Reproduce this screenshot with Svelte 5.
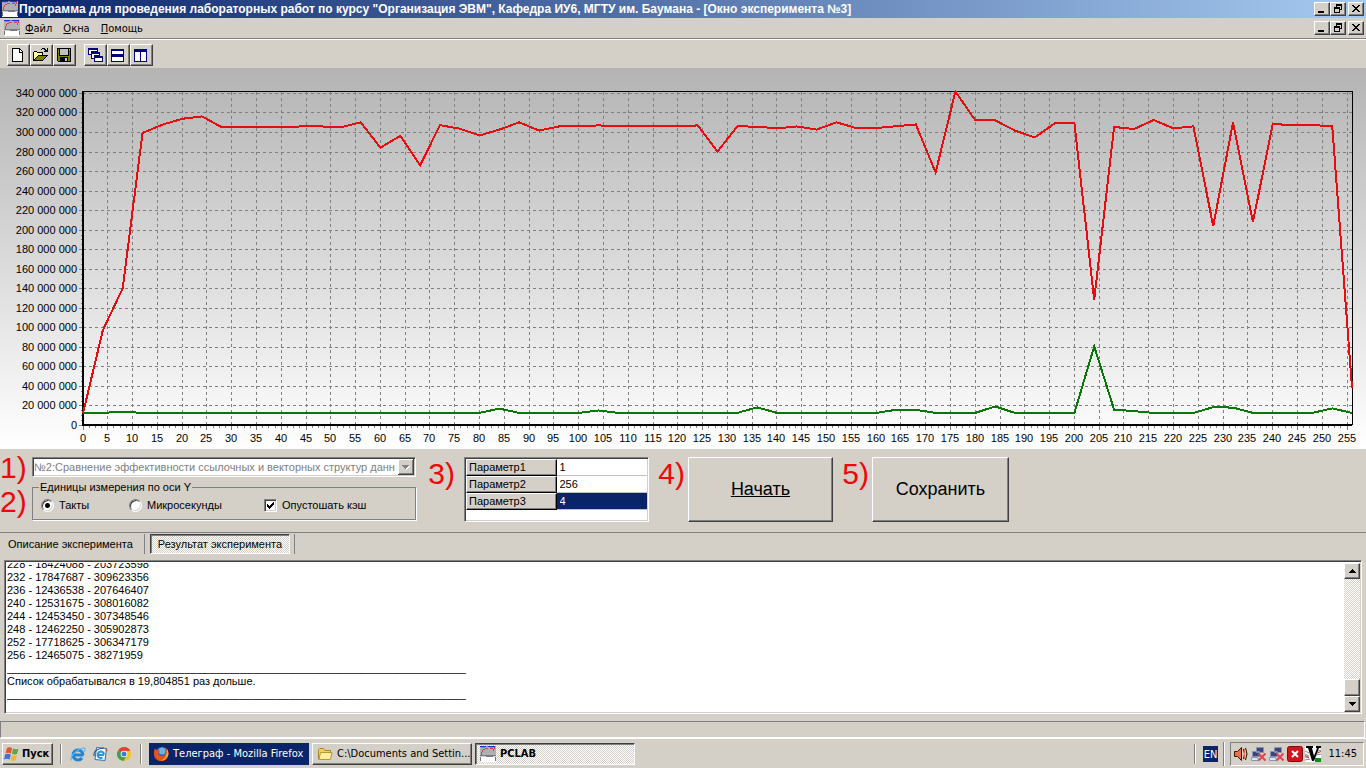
<script>
  const step = 4;
  const redValues = [
    12, 97, 140, 299, 307.5, 313.5, 316, 304.8, 304.8, 304.8, 304.8, 305.8, 305.8, 304.8, 310, 284, 296,
    265.7, 307, 303.5, 296.5, 302.5, 310, 301.5, 305.8, 306, 306.8, 305.8, 305.8, 305.8, 305.8, 306.8, 280,
    305.8, 305.5, 303.6, 305.8, 302.5, 310, 304, 304, 306, 307.8, 258.5, 341.5, 312, 312, 301.5, 294.5,
    308.8, 308.8, 128.3, 305.2, 303, 312.3, 303.7, 305.8, 203.7, 309.6, 207.6, 308, 307.3, 306.8, 306.5, 38.3
  ];
  const greenPeaks = { 8: 13.6, 84: 16.8, 104: 15, 136: 18, 164: 15.6, 168: 15.6, 184: 19, 204: 80.5, 208: 15.8, 212: 14.2, 228: 18.2, 232: 17.8, 252: 17 };
  const greenValues = redValues.map((_, i) => greenPeaks[i * step] ?? 12.4);

  const top = 23;
  const base = 357;
  let width = $state(1366);
  let right = $derived(width - 14);
  const left = 83;

  const yAt = (v) => base - (v * (base - top)) / 342;
  let xAt = $derived((v) => left + (v * (right - left)) / 256);
  const trace = (values) => values.map((v, i) => `${xAt(i * step).toFixed(1)},${yAt(v).toFixed(1)}`).join(' ');

  const yTicks = Array.from({ length: 18 }, (_, i) => i * 20);
  const yMinor = Array.from({ length: 68 }, (_, i) => i * 5);
  const xTicks = Array.from({ length: 52 }, (_, i) => i * 5);
  const xMinor = Array.from({ length: 205 }, (_, i) => i * 1.25);
  const crisp = (n) => Math.round(n) + 0.5;

  const line = '_'.repeat(75);
  const report = [
    '228 - 18424088 - 203723598',
    '232 - 17847687 - 309623356',
    '236 - 12436538 - 207646407',
    '240 - 12531675 - 308016082',
    '244 - 12453450 - 307348546',
    '248 - 12462250 - 305902873',
    '252 - 17718625 - 306347179',
    '256 - 12465075 - 38271959',
    line,
    'Список обрабатывался в 19,804851 раз дольше.',
    line,
    ''
  ].join('\n');

  const params = [
    { name: 'Параметр1', value: '1' },
    { name: 'Параметр2', value: '256' },
    { name: 'Параметр3', value: '4' }
  ];

  let units = $state('ticks');
  let flush = $state(true);
  let output;
  $effect(() => {
    output.scrollTop = output.scrollHeight - output.clientHeight - 2;
  });
</script>

{#snippet appIcon()}
  <svg class="ico" width="16" height="16" viewBox="0 0 16 16" aria-hidden="true">
    <path fill="#b0b0b4" d="M0 0h16v10H0z" />
    <path fill="#2a2ae0" d="M0 0h6v1H0zM8 0h7v1H8z" />
    <path fill="#8585e8" d="M6 0h2v1H6zM1 1h4v1H1zM10 1h4v1h-4z" />
    <path fill="#d8404c" d="M1 6h1v3H1zM2 4h1v2H2zM3 3h2v1H3zM5 2h3v1H5zM10 2h3v1h-3zM13 3h1v2h-1zM14 1h1v2h-1z" />
    <path fill="#7c7c80" d="M0 9h16v1H0zM6 10h7v1H6z" />
    <path fill="#d4d0c8" d="M0 10h6v1H0zM13 10h3v1h-3z" />
    <path fill="#fff" d="M0 11h16v5H0z" />
    <path fill="#777" d="M0 11h1v4H0zM15 11h1v4h-1z" />
  </svg>
{/snippet}

{#snippet windowButtons()}
  <div class="winbtns">
    <button aria-label="Свернуть"><svg width="12" height="10" viewBox="0 0 12 10"><path d="M2 7h6v2H2z" /></svg></button>
    <button aria-label="Восстановить"><svg width="12" height="10" viewBox="0 0 12 10"><path fill-rule="evenodd" d="M4 0h6v6H8v3H2V3h2zM5 2v1h3v2h1V2zM3 5v3h4V5z" /></svg></button>
    <button class="close" aria-label="Закрыть"><svg width="12" height="10" viewBox="0 0 12 10"><path d="M2 1h2v1h1v1h2V2h1V1h2v1H9v1H8v1H7v1h1v1h1v1h1v1H8V7H7V6H5v1H4v1H2V7h1V6h1V5h1V4H4V3H3V2H2z" /></svg></button>
  </div>
{/snippet}

<div class="desktop">
  <header class="title">
    {@render appIcon()}
    <h1>Программа для проведения лабораторных работ по курсу "Организация ЭВМ", Кафедра ИУ6, МГТУ им. Баумана - [Окно эксперимента №3]</h1>
    {@render windowButtons()}
  </header>

  <nav class="menu">
    {@render appIcon()}
    <button><u>Ф</u>айл</button>
    <button><u>О</u>кна</button>
    <button><u>П</u>омощь</button>
    {@render windowButtons()}
  </nav>

  <div class="toolbar">
    <div class="tools">
      <button class="raised" aria-label="Создать">
        <svg width="16" height="16" viewBox="0 0 16 16"><path fill="#000" d="M2 1h8v1h1v1h1v1h1v11H2z" /><path fill="#fff" d="M3 2h6v4h3v8H3z" /><path fill="#fff" d="M10 3h1v1h1v1h-2z" /></svg>
      </button>
      <button class="raised" aria-label="Открыть">
        <svg width="16" height="16" viewBox="0 0 16 16"><path d="M9 1h3v1h1v1h1V1h1v4h-4V4h1V3h-1V2H9V3H8V2h1zM1 4h3v1h6v3h5v1h-1v1h-1v1h-1v1h-1v1h-1v1H0V5h1z" /><path fill="#ffff9c" d="M1 5h3v1h5v2H5v1H4v1H3v1H2v1H1z" /><path fill="#808000" d="M5 9h8v1h-1v1h-1v1h-1v1H2v-1h1v-1h1v-1h1z" /></svg>
      </button>
      <button class="raised" aria-label="Сохранить файл">
        <svg width="16" height="16" viewBox="0 0 16 16"><path d="M1 1h14v14H2v-1H1z" /><path fill="#808000" d="M2 2h1v7h10V3h1v11h-2v-4H4v4H2z" /><path fill="#c0c0c0" d="M4 2h8v6H4zM13 2h1v1h-1zM9 11h2v3H9z" /></svg>
      </button>
    </div>
    <div class="tools">
      <button class="raised" aria-label="Каскадом">
        <svg width="16" height="16" viewBox="0 0 16 16"><path fill="#000080" d="M1 1h10v4h2v4h3v6H7v-3H4V8H1z" /><path fill="#fff" d="M2 3h8v1H4v3H2zM5 7h7v1H7v3H5zM8 11h7v3H8z" /></svg>
      </button>
      <button class="raised" aria-label="По горизонтали">
        <svg width="16" height="16" viewBox="0 0 16 16"><path fill="#000080" d="M1 2h13v13H1z" /><path fill="#fff" d="M2 4h11v3H2zM2 10h11v4H2z" /></svg>
      </button>
      <button class="raised" aria-label="По вертикали">
        <svg width="16" height="16" viewBox="0 0 16 16"><path fill="#000080" d="M1 2h13v13H1z" /><path fill="#fff" d="M2 5h5v9H2zM8 5h5v9H8z" /></svg>
      </button>
    </div>
  </div>

  <section class="chart" bind:clientWidth={width}>
    <svg width="100%" height="381" role="img" aria-label="График">
      <g class="grid">
        {#each yTicks as t}
          {#if t > 0}<path d="M{left} {crisp(yAt(t))}H{right}" />{/if}
        {/each}
        {#each xTicks as t}
          {#if t > 0}<path d="M{crisp(xAt(t) - 0.5)} {base}V{top}" />{/if}
        {/each}
      </g>
      <g class="ticks">
        {#each yTicks as t}<path d="M{left - 4} {crisp(yAt(t))}h4" />{/each}
        {#each yMinor as t}<path d="M{left - 2} {crisp(yAt(t))}h2" />{/each}
        {#each xTicks as t}<path d="M{crisp(xAt(t) - 0.5)} {base}v5" />{/each}
        {#each xMinor as t}<path d="M{crisp(xAt(t) - 0.5)} {base}v3" />{/each}
      </g>
      <path class="frame" d="M{left} {top + 0.5}H{right + 0.5}V{base}" />
      <path class="axis" d="M{left} {top}V{base}H{right}" />
      <polyline class="green" points={trace(greenValues)} />
      <polyline class="red" points={trace(redValues)} />
      {#each yTicks as t}
        <text x={left - 6} y={Math.round(yAt(t)) + 4} text-anchor="end">{t ? `${t} 000 000` : '0'}</text>
      {/each}
      {#each xTicks as t}
        <text x={Math.round(xAt(t) - 0.5)} y={base + 17} text-anchor="middle">{t}</text>
      {/each}
    </svg>
  </section>

  <section class="controls">
    <div class="marks"><span>1)</span><span>2)</span></div>
    <div class="setup">
      <select disabled aria-label="Эксперимент">
        <option>№2:Сравнение эффективности ссылочных и векторных структур данн</option>
      </select>
      <fieldset>
        <legend>Единицы измерения по оси Y</legend>
        <label class="first"><input type="radio" value="ticks" bind:group={units} />Такты</label>
        <label class="second"><input type="radio" value="us" bind:group={units} />Микросекунды</label>
        <label><input type="checkbox" bind:checked={flush} />Опустошать кэш</label>
      </fieldset>
    </div>
    <div class="mark wide">3)</div>
    <div class="params">
      <table>
        <tbody>
          {#each params as p, i}
            <tr class:selected={i === 2}>
              <th scope="row">{p.name}</th>
              <td><input aria-label={p.name} bind:value={p.value} /></td>
            </tr>
          {/each}
        </tbody>
      </table>
    </div>
    <div class="mark">4)</div>
    <button class="raised action"><u>Начать</u></button>
    <div class="mark">5)</div>
    <button class="raised action save">Сохранить</button>
  </section>

  <div class="tabs" role="tablist">
    <button role="tab" aria-selected="false">Описание эксперимента</button>
    <button role="tab" aria-selected="true" class="active">Результат эксперимента</button>
  </div>

  <section class="output">
    <textarea readonly aria-label="Результат эксперимента" bind:this={output} value={report}></textarea>
    <div class="scroll">
      <button class="raised" aria-label="Вверх"><svg width="7" height="4" viewBox="0 0 7 4"><path d="M3 0h1v1h1v1h1v1h1v1H0V3h1V2h1V1h1z" /></svg></button>
      <div class="raised thumb"></div>
      <button class="raised" aria-label="Вниз"><svg width="7" height="4" viewBox="0 0 7 4"><path d="M0 0h7v1H6v1H5v1H4v1H3V3H2V2H1V1H0z" /></svg></button>
    </div>
  </section>

  <div class="status"></div>

  <footer class="taskbar">
    <button class="raised start">
      <svg class="smooth" width="16" height="16" viewBox="0 0 16 16"><path fill="#e0552c" d="M3 2q2-1.500 5 0L7 7.500Q4.500 6 1.500 7.300z" /><path fill="#5aa83c" d="M9 2.500q2.500 1.500 5.500.3L13 8q-2.500 1.200-5-.2z" /><path fill="#3f6fd8" d="M1.200 8.300q3-1.300 5.600.2l-1.300 5q-2.500-1.400-5.500 0z" /><path fill="#f0b823" d="M7.800 9q2.500 1.300 5 .2l-1.300 5.300q-2.500 1-5-.5z" /></svg>
      Пуск
    </button>
    <i class="sep"></i>
    <div class="quick">
      <a href="#ie" aria-label="Internet Explorer"><svg class="smooth" width="16" height="16" viewBox="0 0 16 16"><path fill="none" stroke="#1f86d6" stroke-width="3" d="M13.500 9H4.500M13 9a5 5 0 1 0-1 3" /><path fill="none" stroke="#5fb8f0" stroke-width="1.200" d="M1.500 14.500C-1 11 8 2 14.500 2c1 1 0 3-1 4" /></svg></a>
      <a href="#mail" aria-label="Outlook Express"><svg class="smooth" width="16" height="16" viewBox="0 0 16 16"><path fill="#f4faff" stroke="#3a6ea8" d="M3.500 1.500l10 1-1.500 12-10-1z" /><path fill="none" stroke="#2c93dc" stroke-width="2" d="M11 9H5.500M11 8.500A3.200 3.200 0 1 0 9.500 11.500" /><path fill="none" stroke="#2b5c9c" stroke-width="1.200" d="M1 10q-1-7 10-8" /><path fill="#d8552c" d="M12 2l3 2-2 2z" /></svg></a>
      <a href="#chrome" aria-label="Chrome"><svg class="smooth" width="16" height="16" viewBox="0 0 16 16"><circle cx="8" cy="8" r="7" fill="#f3c51c" /><path fill="#dc4437" d="M8 8L2 4.500A7 7 0 0 1 14.400 5H8z" /><path fill="#3f9f50" d="M8 8L2 4.400A7 7 0 0 0 7.500 15l3-5z" /><circle cx="8" cy="8" r="3.300" fill="#fff" /><circle cx="8" cy="8" r="2.500" fill="#3f78d8" /></svg></a>
    </div>
    <i class="sep"></i>
    <div class="tasks">
      <button class="task alert">
        <svg class="smooth" width="16" height="16" viewBox="0 0 16 16"><circle cx="8.500" cy="7.500" r="6.500" fill="#2d62b0" /><circle cx="9" cy="5" r="3.500" fill="#68b4e4" /><path fill="#e8541c" d="M2 2q0 2 2 2l3 1q0 2-2 2 0 3 4 3 3 0 4-4 0-3-2-5 5 2 4.500 7.500A7.300 7.300 0 0 1 1 9q-.5-4 1-7z" /><path fill="#f9b52c" d="M14 3q3 5-.5 9-2 2.500-5 2.500 6-2.500 5.500-11.500z" /></svg>
        Телеграф - Mozilla Firefox
      </button>
      <button class="task raised">
        <svg class="smooth" width="16" height="16" viewBox="0 0 16 16"><path fill="#f2d060" stroke="#a8862a" d="M1.500 13V3.500l1-1h4l1.500 2h5.500V7l-1 6z" /><path fill="#fff0a0" stroke="#b8962e" d="M3.500 6.500h11.500l-1.500 7H2z" /></svg>
        C:\Documents and Settin...
      </button>
      <button class="task current">
        {@render appIcon()}
        PCLAB
      </button>
    </div>
    <div class="tray">
      <i class="sep"></i>
      <span class="lang">EN</span>
      <i class="sep right"></i>
      <div class="notify">
        <svg class="smooth" width="16" height="16" viewBox="0 0 16 16"><path fill="#e8704a" stroke="#3a1208" d="M1.500 5.500h3l4-4v13l-4-4h-3z" /><path fill="none" stroke="#1c0c08" d="M10.500 3q2 5 0 10M12.500 2q3 6 0 12" /><path stroke="#e8704a" d="M11.500 3v10" /></svg>
        {#each [1, 2] as n (n)}
          <svg class="smooth" width="16" height="16" viewBox="0 0 16 16"><path fill="#3c4480" stroke="#8a90b0" d="M5.500 1.500h7v5h-7zM1.500 5.500h7v5h-7z" /><path fill="#dfe4f4" stroke="#8a94b4" d="M.5 11.500h6l1 3h-7z" /><path stroke="#e0444c" stroke-width="2" d="M7.500 7.500l7 7M14.500 7.500l-7 7" /></svg>
        {/each}
        <svg class="smooth" width="16" height="16" viewBox="0 0 16 16"><rect x=".5" y=".5" width="15" height="15" rx="2" fill="#d4141c" stroke="#7a0c10" /><path fill="none" stroke="#fff" stroke-width="2" d="M5 5l6 6M11 5l-6 6" /></svg>
        <svg class="smooth" width="16" height="16" viewBox="0 0 16 16"><path fill="#fff" d="M0 0h16v16H0z" /><path stroke="#888" d="M0 5l4 2M0 8l4 2M0 11l4 1M0 14l5-1M11 6l5-2M11 9l5-1" /><path stroke="#b33" d="M0 9.500l4 2M11 7.500l5-2" /><path fill="#000" d="M1 0h7v2H7l2 8 3-8h-1V0h5v2h-2L9 15H7L3 2H1z" /><path fill="#0d8a20" d="M10 12h6v4h-6z" /></svg>
        <time>11:45</time>
      </div>
    </div>
  </footer>
</div>

<style>
  :global(body) {
    margin: 0;
    background: #d4d0c8;
  }
  .desktop {
    display: flex;
    flex-direction: column;
    min-height: 100vh;
    background: #d4d0c8;
    color: #000;
    font: 11px/13px "Liberation Sans", Arial, sans-serif;
  }
  button, select, input, textarea {
    font: inherit;
    color: inherit;
    margin: 0;
    padding: 0;
    border: 0;
    background: none;
    box-sizing: border-box;
    border-radius: 0;
    outline: 0;
  }
  svg {
    display: block;
    flex: none;
    shape-rendering: crispEdges;
  }
  .smooth {
    shape-rendering: auto;
  }
  .raised, .winbtns button {
    background: #d4d0c8;
    border: 1px solid;
    border-color: #fff #404040 #404040 #fff;
    box-shadow: inset -1px -1px #808080;
  }

  .title {
    display: flex;
    align-items: center;
    height: 18px;
    padding: 0 2px;
    background: linear-gradient(90deg, #0a246a, #a6caf0);
    color: #fff;
  }
  h1 {
    flex: 1;
    min-width: 0;
    margin: 0 0 0 1px;
    overflow: hidden;
    white-space: nowrap;
    font: bold 12px/16px "Liberation Sans", Arial, sans-serif;
  }
  .winbtns {
    display: flex;
    margin-left: auto;
  }
  .winbtns button {
    width: 16px;
    height: 14px;
    padding: 1px;
  }
  .winbtns .close {
    margin-left: 2px;
  }
  .menu {
    display: flex;
    align-items: center;
    height: 20px;
    padding: 0 2px 0 4px;
    border-bottom: 1px solid #808080;
    font: 11px/13px "DejaVu Sans Condensed", "DejaVu Sans", sans-serif;
  }
  .menu > button {
    margin-left: 5px;
    padding: 0 3px;
  }
  .menu > button:first-of-type {
    margin-left: 2px;
  }
  .toolbar {
    display: flex;
    gap: 8px;
    height: 29px;
    padding: 4px 7px 0;
    border-top: 1px solid #fff;
    box-sizing: border-box;
  }
  .tools {
    display: flex;
  }
  .tools button {
    width: 23px;
    height: 22px;
    padding: 2px;
  }

  .chart {
    background: linear-gradient(#b4b4b4, #fff);
  }
  .grid path {
    stroke: #808080;
    stroke-dasharray: 3 3;
  }
  .ticks path {
    stroke: #808080;
  }
  .frame {
    fill: none;
    stroke: #000;
  }
  .axis {
    fill: none;
    stroke: #000;
    stroke-width: 2;
  }
  polyline {
    fill: none;
    stroke-width: 2;
  }
  .red {
    stroke: #e80c0c;
  }
  .green {
    stroke: #087808;
  }

  .controls {
    display: flex;
    height: 84px;
    padding-top: 8px;
    box-sizing: border-box;
    border-bottom: 1px solid #808080;
  }
  .marks, .mark {
    color: #f00808;
    font-size: 30px;
    line-height: 34px;
    white-space: nowrap;
  }
  .marks {
    display: flex;
    flex-direction: column;
    width: 32px;
    margin-top: -6px;
  }
  .mark {
    width: 39px;
    text-align: right;
    box-sizing: border-box;
    padding-right: 3px;
  }
  .mark.wide {
    width: 48px;
    padding-right: 9px;
  }
  .setup {
    width: 384px;
  }
  select {
    appearance: none;
    display: block;
    width: 100%;
    height: 20px;
    padding: 0 18px 0 1px;
    border: 1px solid;
    border-color: #808080 #fff #fff #808080;
    box-shadow: inset 1px 1px #404040, inset -1px -1px #d4d0c8;
    color: #808080;
    opacity: 1;
    background: #fff url("data:image/svg+xml,%3Csvg xmlns='http://www.w3.org/2000/svg' width='16' height='16' shape-rendering='crispEdges'%3E%3Cpath fill='%23404040' d='M0 0h16v16H0z'/%3E%3Cpath fill='%23fff' d='M0 0h15v15H0z'/%3E%3Cpath fill='%23808080' d='M1 1h14v14H1z'/%3E%3Cpath fill='%23d4d0c8' d='M1 1h13v13H1z'/%3E%3Cpath fill='%23fff' d='M5 7h7v1h-1v1h-1v1H9v1H8V9z'/%3E%3Cpath fill='%23808080' d='M4 6h7v1h-1v1H9v1H8v1H7V9H6V8H5V7H4z'/%3E%3C/svg%3E") no-repeat right 1px top 1px;
  }
  fieldset {
    display: flex;
    align-items: center;
    height: 38px;
    margin: 5px 0 0;
    padding: 0 8px 2px;
    box-sizing: border-box;
    border: 1px solid #808080;
    box-shadow: 1px 1px #fff;
    min-width: 0;
  }
  legend {
    padding: 0 1px;
    margin-left: -2px;
    height: 11px;
    line-height: 11px;
  }
  label {
    display: flex;
    align-items: center;
    gap: 5px;
    white-space: nowrap;
  }
  .first {
    width: 88px;
  }
  .second {
    width: 135px;
  }
  label input {
    appearance: none;
    width: 13px;
    height: 13px;
    background: #fff;
    border: 1px solid;
    border-color: #808080 #fff #fff #808080;
    box-shadow: inset 1px 1px #404040, inset -1px -1px #d4d0c8;
  }
  input[type='radio'] {
    border-radius: 50%;
  }
  input[type='radio']:checked {
    background: radial-gradient(circle, #000 2px, #fff 3px);
  }
  input[type='checkbox']:checked {
    background: #fff url("data:image/svg+xml,%3Csvg xmlns='http://www.w3.org/2000/svg' width='11' height='11' shape-rendering='crispEdges'%3E%3Cpath d='M2 4h1v1h1v1h1V5h1V4h1V3h1V2h1v3H8v1H7v1H6v1H5v1H4V8H3V7H2z'/%3E%3C/svg%3E");
  }

  .params {
    width: 185px;
    height: 65px;
    box-sizing: border-box;
    background: #fff;
    border: 1px solid;
    border-color: #808080 #fff #fff #808080;
    box-shadow: inset 1px 1px #404040, inset -1px -1px #d4d0c8;
    padding: 1px;
  }
  table {
    width: 100%;
    border-collapse: separate;
    border-spacing: 0;
    table-layout: fixed;
  }
  th, td {
    height: 17px;
    padding: 0;
    box-sizing: border-box;
    font-weight: 400;
    text-align: left;
  }
  th {
    padding-left: 2px;
    background: #d4d0c8;
    border: 1px solid;
    border-color: #fff #000 #000 #fff;
    box-shadow: inset -1px -1px #808080;
  }
  td {
    border-bottom: 1px solid #c0c0c0;
  }
  td input {
    display: block;
    width: 100%;
    height: 16px;
    padding-left: 3px;
  }
  .selected td {
    background: #0a246a;
    color: #fff;
  }
  .action {
    width: 145px;
    height: 65px;
    font-size: 18px;
  }
  .action.save {
    width: 137px;
  }

  .tabs {
    display: flex;
    height: 27px;
    box-sizing: border-box;
    padding-top: 1px;
  }
  .tabs button {
    height: 20px;
    margin-right: 5px;
    padding: 0 11px 0 8px;
    border-right: 1px solid #808080;
  }
  .tabs .active {
    padding: 0 7px;
    border: 1px solid;
    border-color: #404040 #fff #fff #404040;
    box-shadow: inset 1px 1px #808080, 4px 0 #d4d0c8, 5px 0 #808080;
  }
  .active, .current, .scroll {
    background: repeating-conic-gradient(#fff 0 25%, #d4d0c8 0 50%) 0 0 / 2px 2px;
  }

  .output {
    display: flex;
    flex: 1;
    height: 154px;
    margin: 0 4px;
    padding: 2px 1px 1px 2px;
    box-sizing: border-box;
    background: #fff;
    border: 1px solid;
    border-color: #808080 #fff #fff #808080;
    box-shadow: inset 1px 1px #404040, inset -1px -1px #d4d0c8;
  }
  textarea {
    flex: 1;
    min-width: 0;
    resize: none;
    overflow: hidden;
    white-space: pre;
    line-height: 13px;
  }
  .scroll {
    display: flex;
    flex-direction: column;
    width: 16px;
  }
  .scroll button {
    display: grid;
    place-items: center;
    width: 16px;
    height: 16px;
  }
  .thumb {
    height: 17px;
    margin-top: auto;
    box-sizing: border-box;
  }

  .status {
    height: 17px;
    margin: 7px 1px 0 0;
    box-sizing: border-box;
    border: 1px solid;
    border-color: #808080 #fff #fff #808080;
  }

  .taskbar {
    display: flex;
    align-items: center;
    height: 30px;
    padding: 0 2px;
    box-sizing: border-box;
    border-top: 1px solid #fff;
    font: 11px/13px "DejaVu Sans Condensed", "DejaVu Sans", sans-serif;
  }
  .start {
    display: flex;
    align-items: center;
    gap: 2px;
    height: 22px;
    width: 51px;
    padding-left: 1px;
    font-weight: 700;
  }
  .sep {
    width: 1px;
    height: 20px;
    margin: 0 7px;
    border-left: 1px solid #808080;
    background: #fff;
  }
  .quick {
    display: flex;
    gap: 7px;
    padding: 0 1px;
  }
  .tasks {
    display: flex;
    gap: 3px;
  }
  .task {
    display: flex;
    align-items: center;
    gap: 4px;
    width: 160px;
    height: 22px;
    padding: 0 4px;
    white-space: nowrap;
  }
  .alert {
    background: #0a246a;
    color: #fff;
  }
  .current {
    font-weight: 700;
    border: 1px solid;
    border-color: #404040 #fff #fff #404040;
    box-shadow: inset 1px 1px #808080;
  }
  .tray {
    display: flex;
    align-items: center;
    margin-left: auto;
  }
  .lang {
    padding: 2px 1px 1px;
    background: #0a246a;
    color: #fff;
  }
  .sep.right {
    height: 24px;
    margin: 0 5px;
  }
  .notify {
    display: flex;
    align-items: center;
    gap: 2px;
    height: 24px;
    padding: 0 6px 0 2px;
    box-sizing: border-box;
    border: 1px solid;
    border-color: #808080 #fff #fff #808080;
  }
  time {
    margin-left: 5px;
  }
</style>
